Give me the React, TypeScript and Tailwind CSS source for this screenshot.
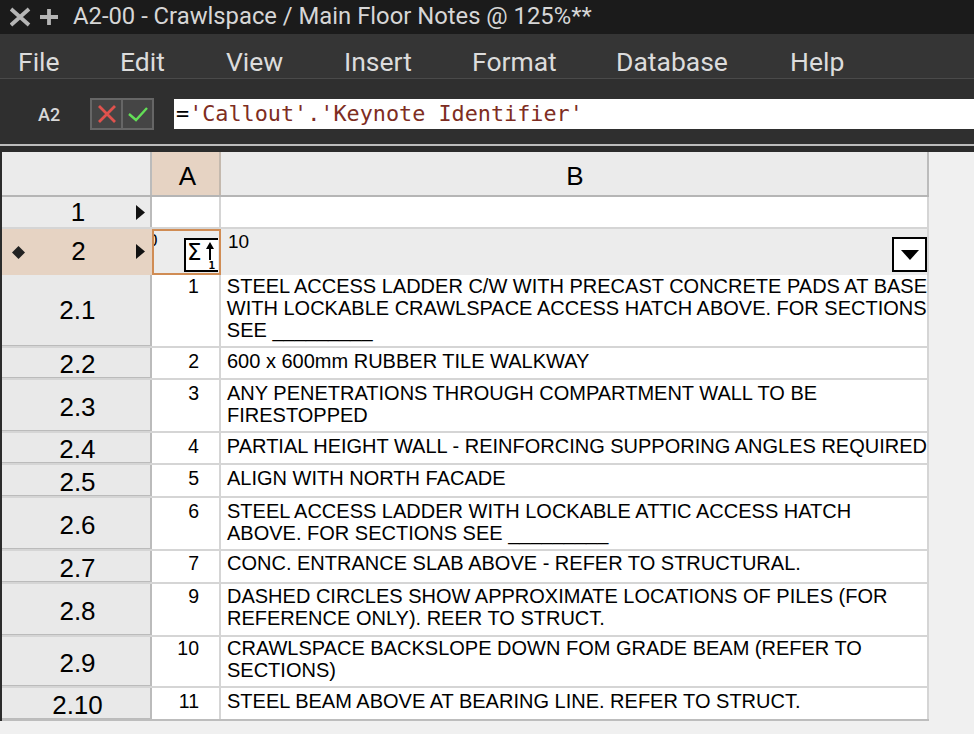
const menus = [
  { label: "File", cls: "w-[102px]" },
  { label: "Edit", cls: "w-[106px]" },
  { label: "View", cls: "w-[118px]" },
  { label: "Insert", cls: "w-[128px]" },
  { label: "Format", cls: "w-[144px]" },
  { label: "Database", cls: "w-[174px]" },
  { label: "Help", cls: "w-[80px]" },
];

const rows = [
  { id: "2.1", n: "1", h: "h-[73px]", pt: "pt-0", text: ["STEEL ACCESS LADDER C/W WITH PRECAST CONCRETE PADS AT BASE", "WITH LOCKABLE CRAWLSPACE ACCESS HATCH ABOVE. FOR SECTIONS", "SEE _________"] },
  { id: "2.2", n: "2", h: "h-[32px]", pt: "pt-[2px]", text: ["600 x 600mm RUBBER TILE WALKWAY"] },
  { id: "2.3", n: "3", h: "h-[53px]", pt: "pt-[2px]", text: ["ANY PENETRATIONS THROUGH COMPARTMENT WALL TO BE", "FIRESTOPPED"] },
  { id: "2.4", n: "4", h: "h-[32px]", pt: "pt-[2px]", text: ["PARTIAL HEIGHT WALL - REINFORCING SUPPORING ANGLES REQUIRED"] },
  { id: "2.5", n: "5", h: "h-[33px]", pt: "pt-[2px]", text: ["ALIGN WITH NORTH FACADE"] },
  { id: "2.6", n: "6", h: "h-[53px]", pt: "pt-[2px]", text: ["STEEL ACCESS LADDER WITH LOCKABLE ATTIC ACCESS HATCH", "ABOVE. FOR SECTIONS SEE _________"] },
  { id: "2.7", n: "7", h: "h-[33px]", pt: "pt-[1px]", text: ["CONC. ENTRANCE SLAB ABOVE - REFER TO STRUCTURAL."] },
  { id: "2.8", n: "9", h: "h-[53px]", pt: "pt-[1px]", text: ["DASHED CIRCLES SHOW APPROXIMATE LOCATIONS OF PILES (FOR", "REFERENCE ONLY). REER TO STRUCT."] },
  { id: "2.9", n: "10", h: "h-[51px]", pt: "pt-0", text: ["CRAWLSPACE BACKSLOPE DOWN FOM GRADE BEAM (REFER TO", "SECTIONS)"] },
  { id: "2.10", n: "11", h: "h-[33px]", pt: "pt-[2px]", text: ["STEEL BEAM ABOVE AT BEARING LINE. REFER TO STRUCT."] },
];

function Arrow() {
  return (
    <svg width="9" height="15" viewBox="0 0 9 15" className="shrink-0">
      <path d="M0 0 L9 7.5 L0 15 Z" fill="#111" />
    </svg>
  );
}

export default function App() {
  return (
    <div className="flex h-[734px] w-[974px] flex-col overflow-hidden bg-[#f0f0f0] font-['Liberation_Sans',Arial,sans-serif] text-black">
      <div className="flex h-[34px] items-center bg-[#1b1b1b] pl-[10px] text-[#d6d6d6]">
        <svg width="50" height="22" viewBox="0 0 50 22">
          <path d="M1 3 L19 19 M19 3 L1 19" stroke="#b5b5b5" strokeWidth="3.8" />
          <path d="M30 11 H48 M39 3 V19" stroke="#b5b5b5" strokeWidth="3.8" />
        </svg>
        <span className="ml-[13px] font-['Roboto',sans-serif] text-[23.8px]">A2-00 - Crawlspace / Main Floor Notes @ 125%**</span>
      </div>

      <div className="flex h-[45px] items-center border-b border-[#4a4a4a] bg-[#353535] pl-[18px] pt-[11px] text-[#dcdcdc]">
        {menus.map((m) => (
          <span key={m.label} className={`${m.cls} font-['Roboto',sans-serif] text-[26.5px] leading-[30px]`}>{m.label}</span>
        ))}
      </div>

      <div className="flex h-[65px] items-center bg-[#2f2f2f] pt-[5px]">
        <span className="ml-[38px] w-[52px] font-['Roboto',sans-serif] text-[18px] font-medium text-[#d8d8d8]">A2</span>
        <div className="flex h-[32px] w-[64px] border-2 border-[#666] bg-[#454545]">
          <div className="flex w-[31px] items-center justify-center border-r-2 border-[#666]">
            <svg width="20" height="20" viewBox="0 0 20 20">
              <path d="M2 2 L18 18 M18 2 L2 18" stroke="#e0524d" strokeWidth="2.8" />
            </svg>
          </div>
          <div className="flex flex-1 items-center justify-center">
            <svg width="22" height="16" viewBox="0 0 22 16">
              <path d="M2 8 L9 14 L20 2" fill="none" stroke="#63de57" strokeWidth="2.4" />
            </svg>
          </div>
        </div>
        <div className="ml-[20px] flex h-[30px] flex-1 items-center whitespace-pre bg-white pl-[2px] font-['DejaVu_Sans_Mono',monospace] text-[21.8px] text-[#7e2d22]">
          <span className="text-black">=</span>'Callout'.'Keynote Identifier'
        </div>
      </div>

      <div className="h-[2px] bg-[#bcbcbc]" />
      <div className="h-[6px] bg-[#2b2b2b]" />

      <div className="w-[929px] border-l-2 border-[#2b2b2b]">
        <div className="flex h-[45px] border-b-2 border-[#b5b5b5]">
          <div className="w-[150px] border-r-2 border-[#bbb] bg-[#ebebeb]" />
          <div className="flex w-[69px] items-center justify-center border-r-2 border-[#c4b9ae] bg-[#e6d3c3] pl-[4px] pt-[5px] text-[26px]">A</div>
          <div className="flex flex-1 items-center justify-center border-r-2 border-[#bbb] bg-[#ebebeb] pl-[2px] pt-[5px] text-[26px]">B</div>
        </div>

        <div className="flex h-[32px] border-b-2 border-[#d5d5d5]">
          <div className="flex w-[150px] items-center border-r-2 border-[#bbb] bg-[#ebebeb] pr-[5px]">
            <span className="flex-1 pl-[18px] text-center text-[26px]">1</span>
            <Arrow />
          </div>
          <div className="w-[69px] border-r-2 border-[#d5d5d5] bg-white" />
          <div className="flex-1 border-r-2 border-[#d5d5d5] bg-white" />
        </div>

        <div className="flex h-[46px]">
          <div className="flex w-[150px] items-center border-r-2 border-[#e6d3c3] bg-[#e6d3c3] pb-[2px] pl-[10px] pr-[5px]">
            <svg width="13" height="13" viewBox="0 0 13 13" className="mt-[2px] shrink-0">
              <path d="M6.5 0 L13 6.5 L6.5 13 L0 6.5 Z" fill="#222" />
            </svg>
            <span className="flex-1 pr-[4px] text-center text-[26px]">2</span>
            <Arrow />
          </div>
          <div className="relative w-[69px] overflow-hidden border-2 border-[#d08c54] bg-[#ececec]">
            <span className="absolute -left-[6px] top-[1px] text-[17px] leading-[18px]">0</span>
            <div className="absolute bottom-[1px] left-[30px] h-[34px] w-[34px] border-y-2 border-l-2 border-black bg-white">
              <span className="absolute left-[1px] top-[-1px] font-['DejaVu_Sans',sans-serif] text-[23px] leading-[26px]">Σ</span>
              <svg width="10" height="19" viewBox="0 0 10 19" className="absolute left-[19px] top-[1px]">
                <path d="M5 1 L9 8 H6 V19 H4 V8 H1 Z" fill="#000" />
              </svg>
              <span className="absolute bottom-[-2px] right-[3px] font-['DejaVu_Sans_Mono',monospace] text-[11px] font-bold leading-[12px]">1</span>
            </div>
          </div>
          <div className="relative flex-1 border-r-2 border-[#d5d5d5] bg-[#ececec] pl-[7px] pt-[1px] text-[19px] leading-[24px]">
            10
            <div className="absolute bottom-[3px] right-0 flex h-[35px] w-[35px] items-center justify-center border-2 border-black bg-white">
              <svg width="18" height="10" viewBox="0 0 18 10">
                <path d="M0 0 H18 L9 10 Z" fill="#000" />
              </svg>
            </div>
          </div>
        </div>

        {rows.map((r, i) => (
          <div key={r.id} className={`flex ${r.h} border-b-2 ${i === rows.length - 1 ? "border-[#bdbdbd]" : "border-[#d5d5d5]"}`}>
            <div className={`flex w-[150px] items-center justify-center border-b border-r-2 border-[#bbb] bg-[#e9e9e9] pl-[3px] text-[26px] ${i === 0 ? "pt-0" : "pt-[4px]"}`}>{r.id}</div>
            <div className={`w-[69px] border-r-2 border-[#d5d5d5] bg-white pr-[20px] text-right text-[19.5px] leading-[22px] ${r.pt}`}>{r.n}</div>
            <div className={`flex-1 whitespace-nowrap border-r-2 border-[#d5d5d5] bg-white pl-[6px] text-[20px] leading-[22px] ${r.pt}`}>
              {r.text.map((t) => (
                <div key={t}>{t}</div>
              ))}
            </div>
          </div>
        ))}
      </div>
    </div>
  );
}
